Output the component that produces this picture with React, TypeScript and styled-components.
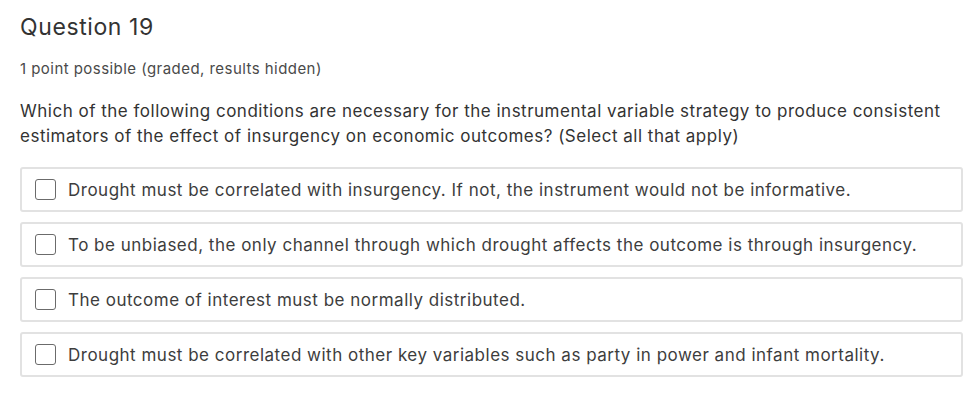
import styled, { createGlobalStyle } from "styled-components";

const GlobalStyle = createGlobalStyle`
  body {
    margin: 0;
    background: #ffffff;
    font-family: Inter, "Open Sans", sans-serif;
  }
`;

const Problem = styled.div`
  padding: 12px 15px 20px 20px;
  color: #313131;
`;

const Title = styled.h3`
  margin: 0;
  font-size: 23px;
  line-height: 30px;
  font-weight: 400;
  letter-spacing: 0.6px;
  color: #333333;
`;

const Meta = styled.p`
  margin: 17px 0 0 0;
  font-size: 15px;
  line-height: 20px;
  letter-spacing: 0.45px;
  color: #4a4a4a;
`;

const Prompt = styled.p`
  margin: 20px 0 0 0;
  font-size: 17px;
  line-height: 25px;
  letter-spacing: 0.5px;
  color: #333333;
`;

const Choices = styled.div`
  display: flex;
  flex-direction: column;
  gap: 10px;
  margin-top: 18px;
`;

const Choice = styled.label`
  display: flex;
  align-items: center;
  height: 45px;
  box-sizing: border-box;
  padding: 0 13px;
  border: 2px solid #e2e2e2;
  border-radius: 3px;
  font-size: 17px;
  letter-spacing: 0.5px;
  color: #3d3d3d;
  cursor: pointer;
`;

const Box = styled.span`
  width: 21px;
  height: 21px;
  box-sizing: border-box;
  border: 1px solid #6b6b6b;
  border-radius: 3px;
  background: #ffffff;
  flex-shrink: 0;
  margin-right: 12px;
`;

const choices = [
  "Drought must be correlated with insurgency. If not, the instrument would not be informative.",
  "To be unbiased, the only channel through which drought affects the outcome is through insurgency.",
  "The outcome of interest must be normally distributed.",
  "Drought must be correlated with other key variables such as party in power and infant mortality.",
];

export default function App() {
  return (
    <>
      <GlobalStyle />
      <Problem>
        <Title>Question 19</Title>
        <Meta>1 point possible (graded, results hidden)</Meta>
        <Prompt>
          Which of the following conditions are necessary for the instrumental variable strategy to produce consistent
          <br />
          estimators of the effect of insurgency on economic outcomes? (Select all that apply)
        </Prompt>
        <Choices>
          {choices.map((c) => (
            <Choice key={c}>
              <Box />
              {c}
            </Choice>
          ))}
        </Choices>
      </Problem>
    </>
  );
}
